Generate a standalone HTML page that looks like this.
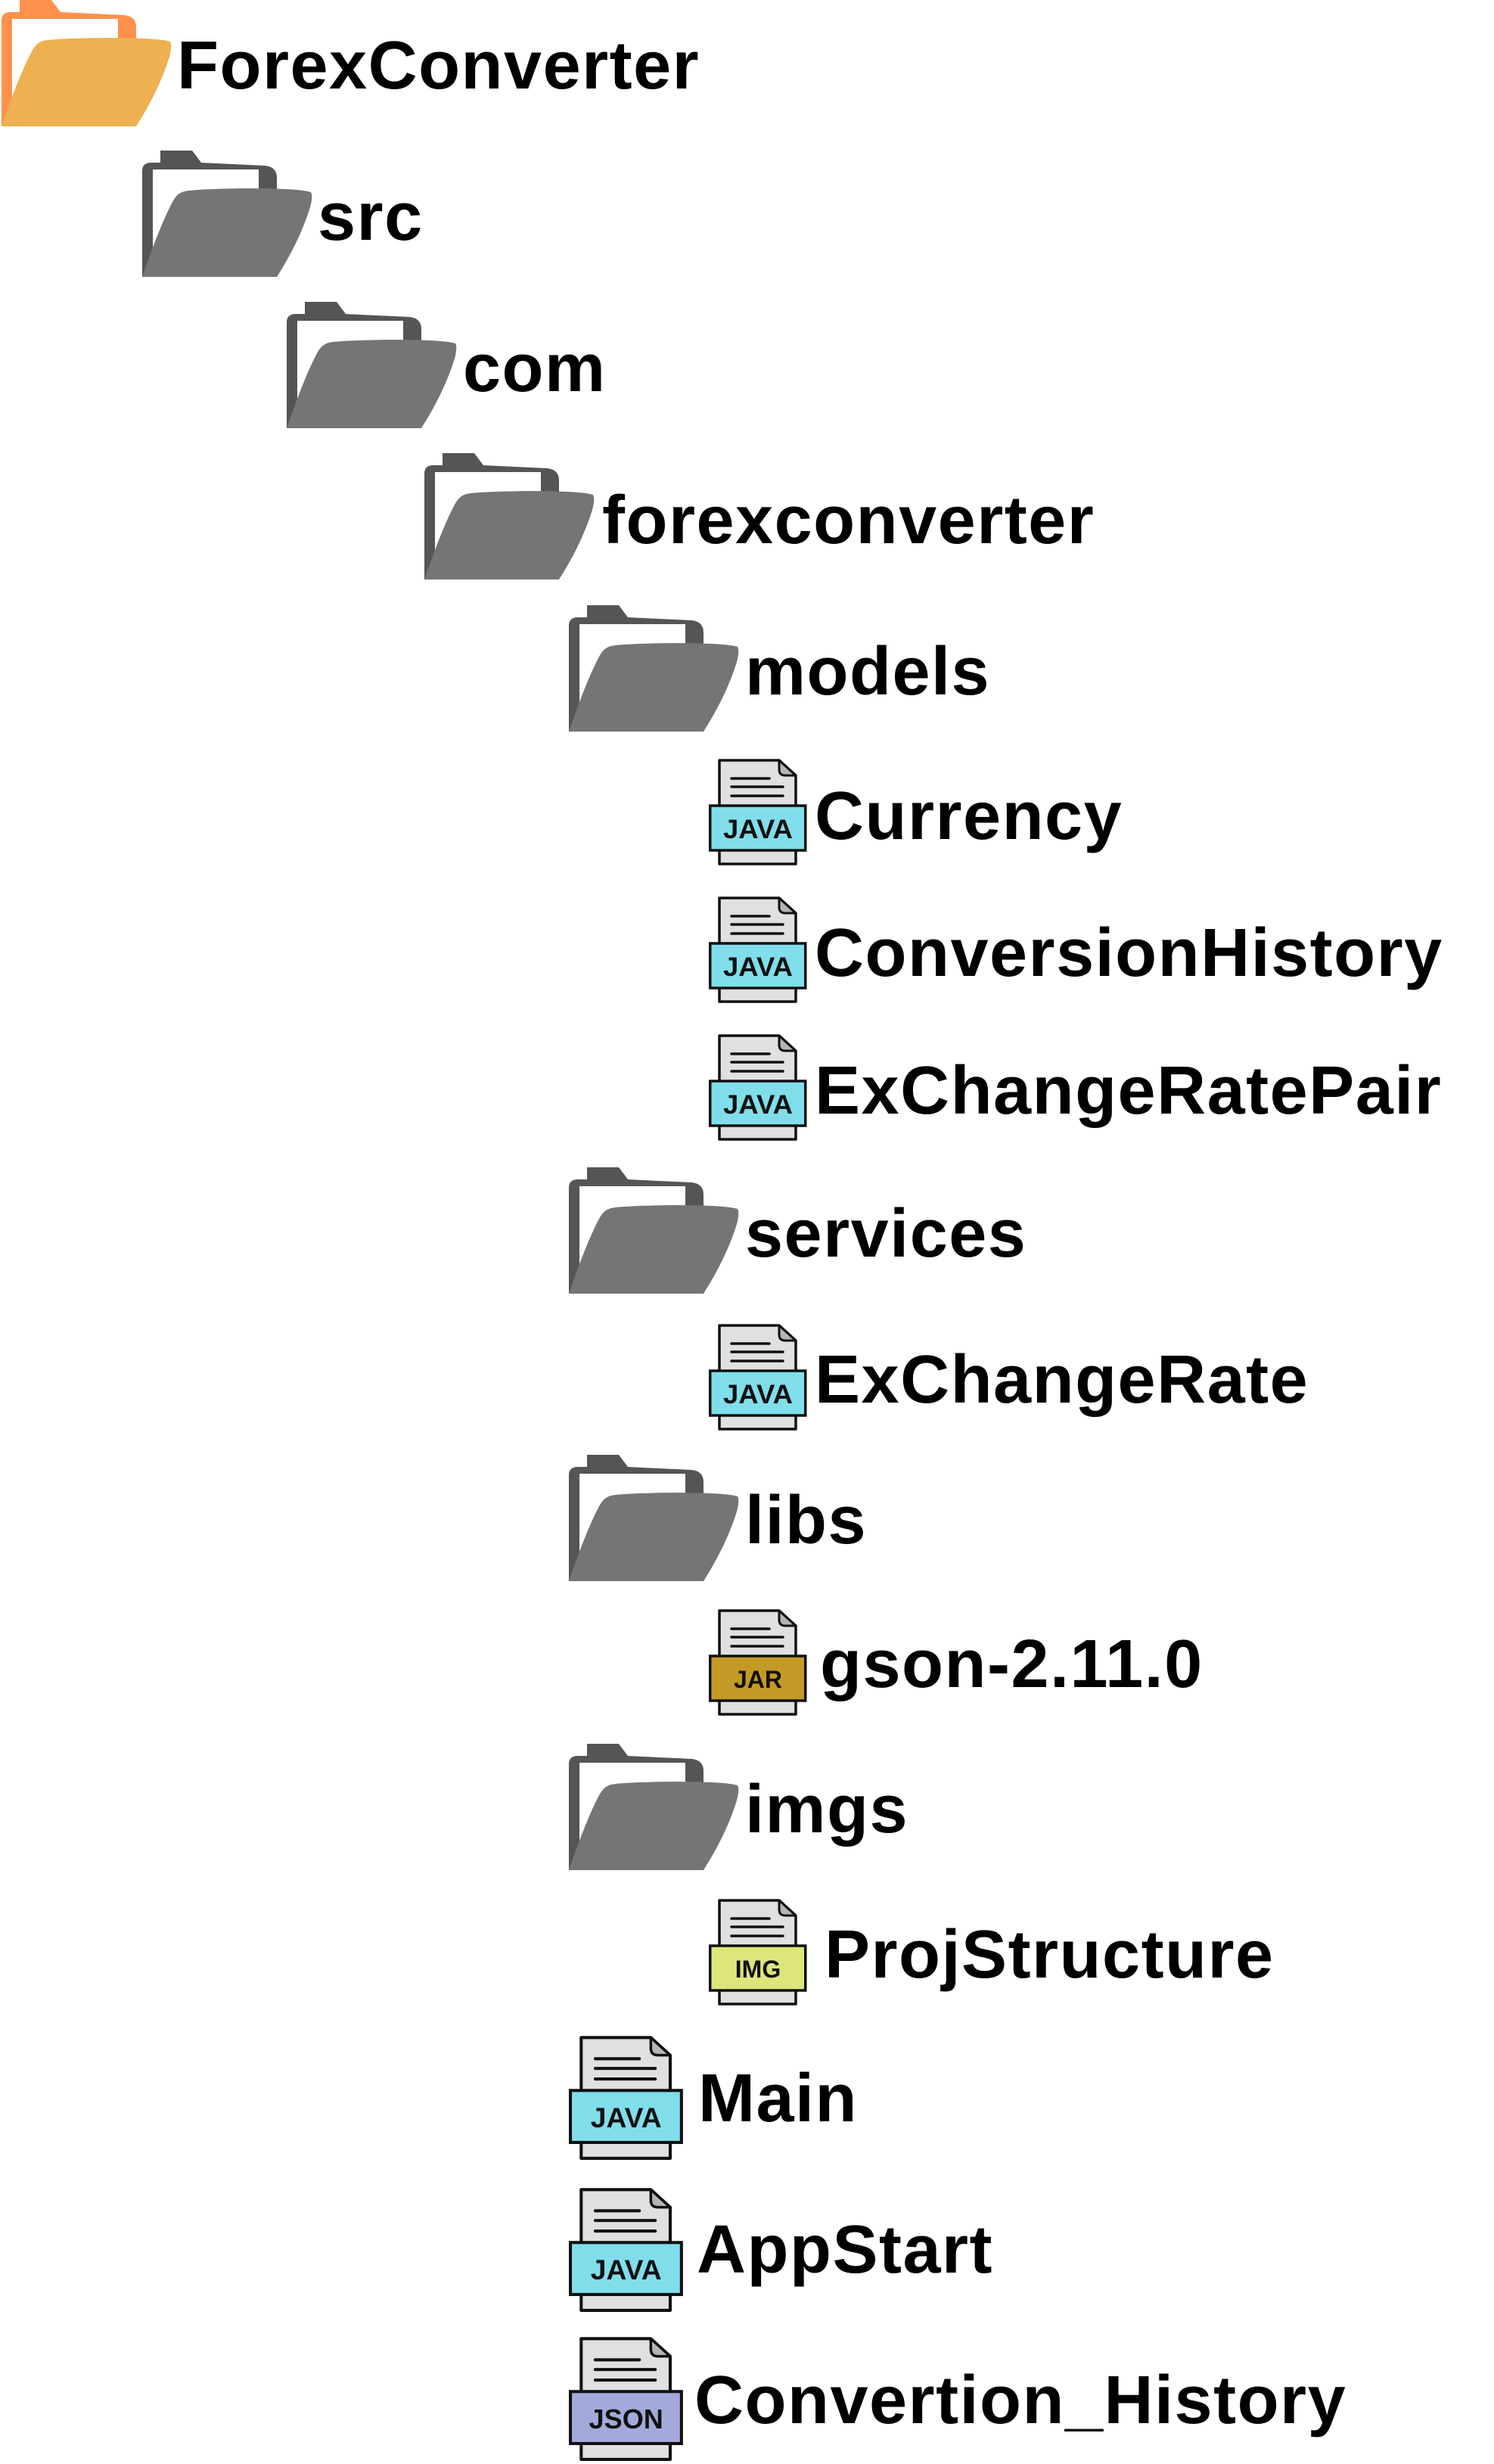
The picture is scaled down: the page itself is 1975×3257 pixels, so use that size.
<!DOCTYPE html>
<html><head><meta charset="utf-8"><style>
html,body{margin:0;padding:0;background:#fff;}
svg{display:block;}
text.t{font-family:"Liberation Sans",Arial,sans-serif;font-weight:bold;font-size:90px;letter-spacing:1.5px;fill:#000;}
text.l{font-family:"Liberation Sans",Arial,sans-serif;font-weight:bold;fill:#111;text-anchor:middle;}
</style></head><body>
<svg width="1975" height="3257" viewBox="0 0 1975 3257" xmlns="http://www.w3.org/2000/svg">
<defs>
<symbol id="fo" viewBox="0 0 227 168" width="227" height="168">
<path d="M26 0 H68 L80 16 L165 20 Q180 22 180 36 V60 H156 V25 H16 V167 H2 V27 Q2 16 14 16 H26 Z" fill="#FF914D"/>
<path d="M55 55 Q60 51 140 50 Q210 50 225 55 Q228 60 224 75 Q210 120 180 167 H2 Q25 100 42 68 Q48 57 55 55 Z" fill="#EEB050"/>
</symbol>
<symbol id="fg" viewBox="0 0 227 168" width="227" height="168">
<path d="M26 0 H68 L80 16 L165 20 Q180 22 180 36 V60 H156 V25 H16 V167 H2 V27 Q2 16 14 16 H26 Z" fill="#555555"/>
<path d="M55 55 Q60 51 140 50 Q210 50 225 55 Q228 60 224 75 Q210 120 180 167 H2 Q25 100 42 68 Q48 57 55 55 Z" fill="#757575"/>
</symbol>
<g id="pg">
<path d="M14 2 H93 L115 22 V139 H14 Z" fill="#E0E0E0" stroke="#111" stroke-width="3.5" stroke-linejoin="round"/>
<path d="M93 2 V14 Q93 22 101 22 H115 Z" fill="#B5B5B5" stroke="#111" stroke-width="3" stroke-linejoin="round"/>
<path d="M30 26 H80 M30 37 H98 M30 49 H98" stroke="#111" stroke-width="3.5" stroke-linecap="round"/>
</g>
</defs>

<use href="#fo" x="0" y="0"/>
<use href="#fg" x="186" y="199"/>
<use href="#fg" x="377" y="399"/>
<use href="#fg" x="559" y="599"/>
<use href="#fg" x="750" y="800"/>
<use href="#fg" x="750" y="1543"/>
<use href="#fg" x="750" y="1923"/>
<use href="#fg" x="750" y="2305"/>

<text class="t" x="234" y="117">ForexConverter</text>
<text class="t" x="420" y="317">src</text>
<text class="t" x="612" y="517">com</text>
<text class="t" x="796" y="718">forexconverter</text>
<text class="t" x="985" y="918">models</text>
<text class="t" x="985" y="1661">services</text>
<text class="t" x="985" y="2040">libs</text>
<text class="t" x="985" y="2422">imgs</text>

<g transform="translate(937,1003)"><use href="#pg"/><rect x="1.75" y="62" width="126" height="59" fill="#80DEEA" stroke="#111" stroke-width="3.5"/><text class="l" x="65" y="105" font-size="35" textLength="92" lengthAdjust="spacingAndGlyphs">JAVA</text></g>
<g transform="translate(937,1185)"><use href="#pg"/><rect x="1.75" y="62" width="126" height="59" fill="#80DEEA" stroke="#111" stroke-width="3.5"/><text class="l" x="65" y="105" font-size="35" textLength="92" lengthAdjust="spacingAndGlyphs">JAVA</text></g>
<g transform="translate(937,1367)"><use href="#pg"/><rect x="1.75" y="62" width="126" height="59" fill="#80DEEA" stroke="#111" stroke-width="3.5"/><text class="l" x="65" y="105" font-size="35" textLength="92" lengthAdjust="spacingAndGlyphs">JAVA</text></g>
<g transform="translate(937,1750)"><use href="#pg"/><rect x="1.75" y="62" width="126" height="59" fill="#80DEEA" stroke="#111" stroke-width="3.5"/><text class="l" x="65" y="105" font-size="35" textLength="92" lengthAdjust="spacingAndGlyphs">JAVA</text></g>
<g transform="translate(937,2127)"><use href="#pg"/><rect x="1.75" y="62" width="126" height="59" fill="#C49A26" stroke="#111" stroke-width="3.5"/><text class="l" x="65" y="104" font-size="32">JAR</text></g>
<g transform="translate(937,2510)"><use href="#pg"/><rect x="1.75" y="62" width="126" height="59" fill="#DDE67A" stroke="#111" stroke-width="3.5"/><text class="l" x="65" y="104" font-size="32">IMG</text></g>

<g transform="translate(752,2691) scale(1.165)"><use href="#pg"/><rect x="1.75" y="62" width="126" height="59" fill="#80DEEA" stroke="#111" stroke-width="3.5"/><text class="l" x="65" y="104" font-size="32">JAVA</text></g>
<g transform="translate(752,2892) scale(1.165)"><use href="#pg"/><rect x="1.75" y="62" width="126" height="59" fill="#80DEEA" stroke="#111" stroke-width="3.5"/><text class="l" x="65" y="104" font-size="32">JAVA</text></g>
<g transform="translate(752,3089) scale(1.165)"><use href="#pg"/><rect x="1.75" y="62" width="126" height="59" fill="#A3AADB" stroke="#111" stroke-width="3.5"/><text class="l" x="65" y="104" font-size="31">JSON</text></g>

<text class="t" x="1077" y="1109">Currency</text>
<text class="t" x="1077" y="1290">ConversionHistory</text>
<text class="t" x="1077" y="1472">ExChangeRatePair</text>
<text class="t" x="1077" y="1854">ExChangeRate</text>
<text class="t" x="1084" y="2230">gson-2.11.0</text>
<text class="t" x="1090" y="2614">ProjStructure</text>
<text class="t" x="923" y="2804">Main</text>
<text class="t" x="921" y="3004">AppStart</text>
<text class="t" x="918" y="3203">Convertion_History</text>
</svg>
</body></html>
